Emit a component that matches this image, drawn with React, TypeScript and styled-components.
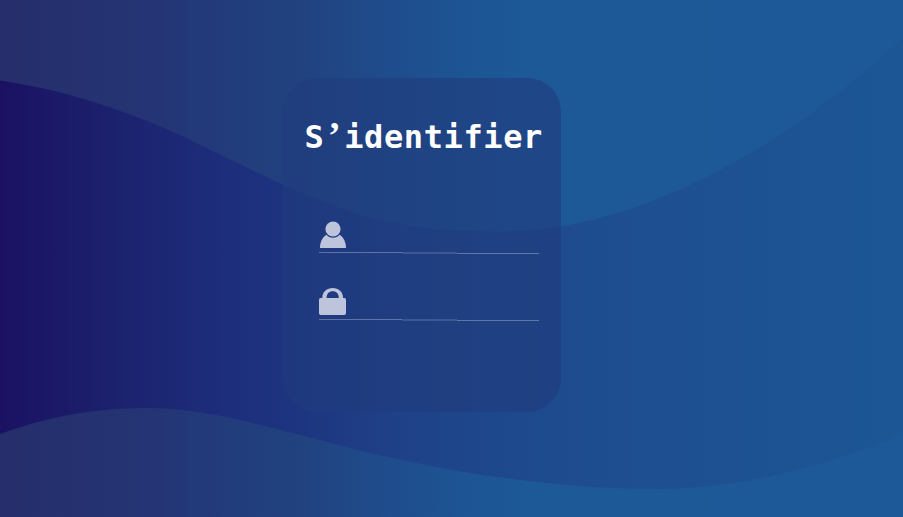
import React from "react";
import styled, { createGlobalStyle } from "styled-components";

const GlobalStyle = createGlobalStyle`
  html, body, #root { height: 100%; }
  body { margin: 0; overflow: hidden; background: #1d5898; }
`;

const Page = styled.main`
  display: grid;
  grid-template: 100% / 100%;
  height: 100vh;
  overflow: hidden;
  background: linear-gradient(
    90deg,
    #262e6b 0,
    #243474 17%,
    #22397a 22%,
    #21427f 33.2%,
    #1f4c8c 43%,
    #1d5594 52%,
    #1d5897 58%,
    #1d5898 100%
  );
`;

const Wave = styled.svg`
  grid-area: 1 / 1;
  width: 100%;
  height: 100%;
`;

const Card = styled.form`
  grid-area: 1 / 1;
  box-sizing: border-box;
  width: 278px;
  height: 334px;
  margin: 78.4px 0 0 283.2px;
  border-radius: 34px;
  background: rgba(32, 60, 124, 0.62);
  display: flex;
  flex-direction: column;
  align-items: flex-start;
  padding: 36.6px 0 0 21.3px;
`;

const Title = styled.h1`
  margin: 0 0 61px;
  height: 44px;
  color: #fff;
  font: 700 32px/44px "DejaVu Sans Mono", monospace;
  letter-spacing: 0.6px;
  white-space: nowrap;
`;

const Apostrophe = styled.span`
  display: inline-block;
  width: 19.86px;
  line-height: 1;
  letter-spacing: 0;
  text-align: center;
  font-family: "Liberation Serif", serif;
  font-size: 38px;
`;

const Field = styled.label`
  display: flex;
  flex-direction: column;
  width: 221px;
  height: 67px;
  margin-left: 14.5px;
`;

const FieldIcon = styled.svg`
  width: 28px;
  height: 30px;
  fill: #bdc4db;
`;

const Underline = styled.svg`
  width: 221px;
  height: 6px;
  fill: none;
  stroke: rgba(189, 196, 219, 0.42);
`;

const Rule = () => (
  <Underline viewBox="0 0 221 6">
    <path d="M0 2.5H83M138 3.5H220" />
    <path d="M83 3H138" strokeWidth="2" opacity="0.45" />
  </Underline>
);

export default function App() {
  return (
    <>
      <GlobalStyle />
      <Page>
        <Wave viewBox="0 0 903 517" preserveAspectRatio="none">
          <defs>
            <linearGradient id="band" x1="0" x2="903" y1="0" y2="0" gradientUnits="userSpaceOnUse">
              <stop offset="0" stopColor="#1b1162" />
              <stop offset="0.06" stopColor="#1b1968" />
              <stop offset="0.15" stopColor="#1c2470" />
              <stop offset="0.24" stopColor="#1d2d7b" />
              <stop offset="0.33" stopColor="#1d3580" />
              <stop offset="0.43" stopColor="#1f4087" />
              <stop offset="0.55" stopColor="#1e488c" />
              <stop offset="0.68" stopColor="#1e4e90" />
              <stop offset="1" stopColor="#1c5694" />
            </linearGradient>
          </defs>
          <path
            fill="url(#band)"
            d="M0 80.5C60 89 120 108 180 135C235 161 295 194 355 213C403 228 450 231.5 497 231.5C550 231.5 598 221 644 204C745 166 825 109 903 38V434C823 467 742 489 653 489C607 489 560 485 513 479C437 470 367 453 300 435C247 421 197 408 145 408C97 408 50 416 0 434Z"
          />
        </Wave>
        <Card>
          <Title>
            S<Apostrophe>’</Apostrophe>identifier
          </Title>
          <Field aria-label="Utilisateur">
            <FieldIcon viewBox="0 0 28 30">
              <circle cx="14" cy="9" r="7.6" />
              <path d="M1 28C1 22 3.5 17.3 7.4 14.7C10.6 18.7 17.4 18.7 20.6 14.7C24.5 17.3 27 22 27 28Z" />
            </FieldIcon>
            <Rule />
          </Field>
          <Field aria-label="Mot de passe">
            <FieldIcon viewBox="0 0 28 30">
              <path
                fillRule="evenodd"
                d="M3.3 11C3.3 4.7 8 1 13.7 1S24.1 4.7 24.1 11H25.3Q27 11 27 12.7V26.3Q27 28 25.3 28H1.7Q0 28 0 26.3V12.7Q0 11 1.7 11ZM7.6 11H19.8C19.8 6.8 17.4 4.3 13.7 4.3S7.6 6.8 7.6 11Z"
              />
            </FieldIcon>
            <Rule />
          </Field>
        </Card>
      </Page>
    </>
  );
}
